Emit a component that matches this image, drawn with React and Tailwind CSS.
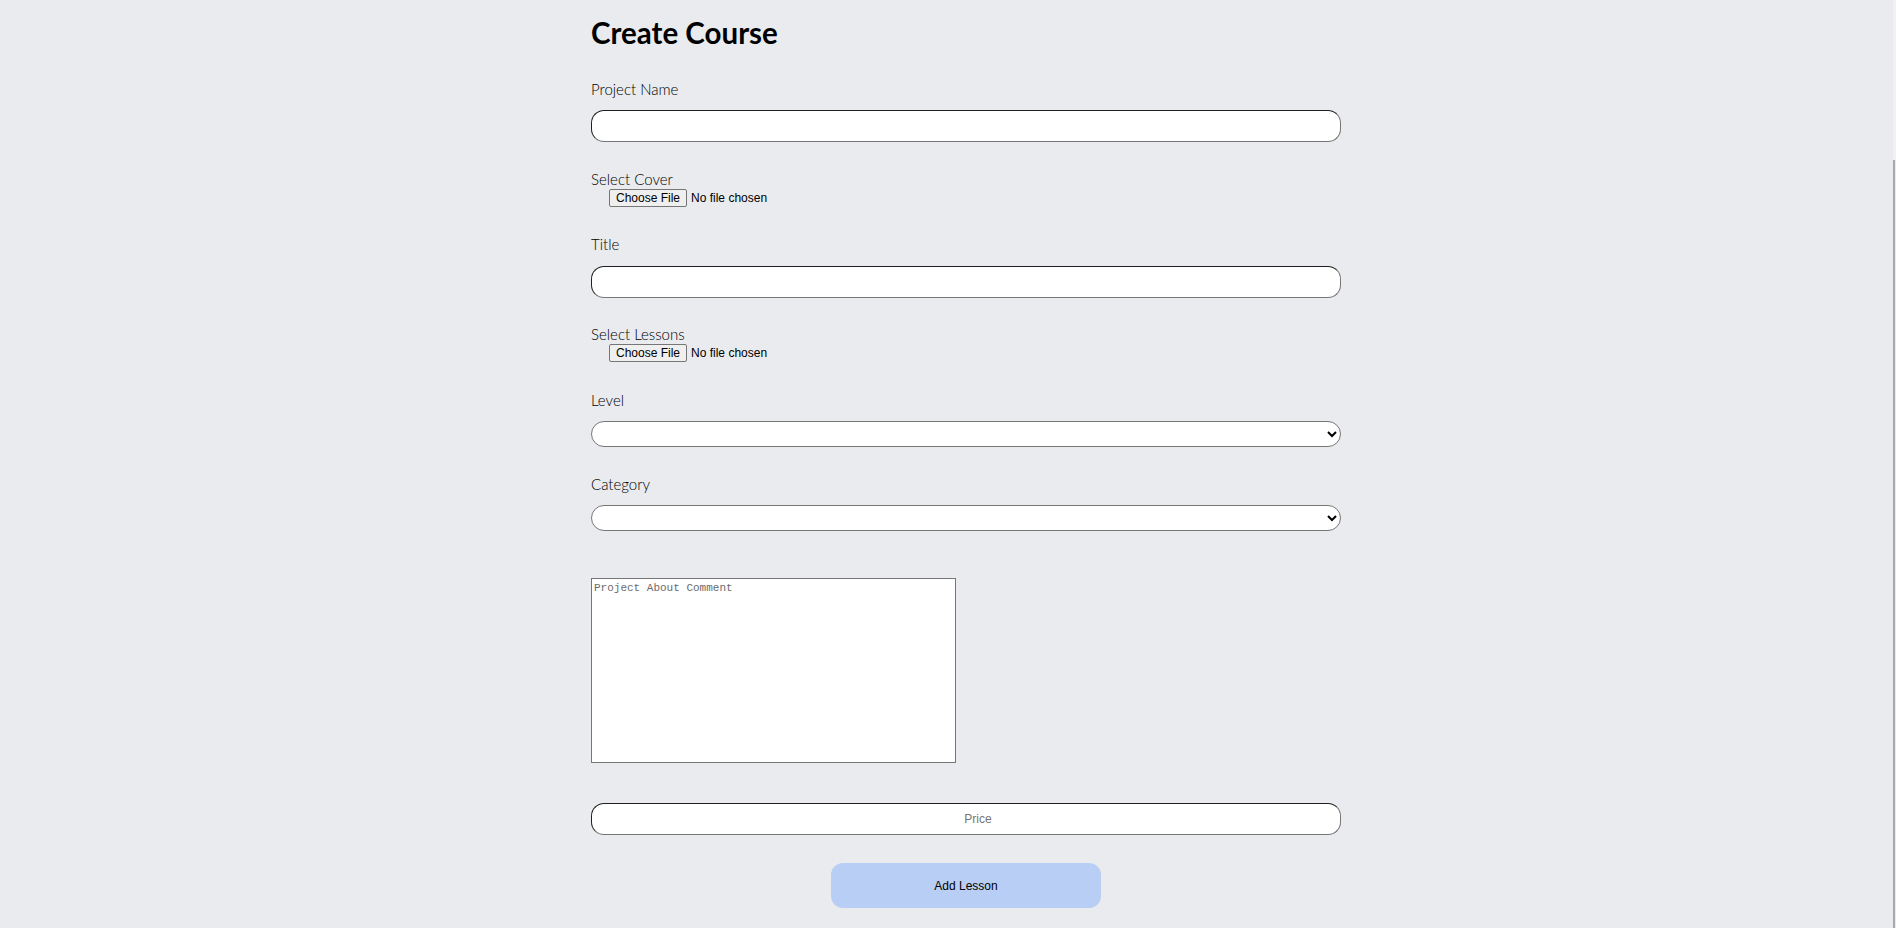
import React from 'react';

const labelCls = "block text-[15px] leading-[20px] font-light text-black font-['Lato',sans-serif]";
const inputCls =
  "block w-full h-[32px] rounded-[13px] border border-t-[#1f1f1f] border-l-[#1f1f1f] border-r-[#767676] border-b-[#767676] bg-white px-2 text-[12px] font-['Liberation_Sans',Arial,sans-serif] outline-none";
const selectCls =
  "block w-full h-[26px] rounded-[13px] border border-[#767676] bg-white px-1 text-[12px] font-['Liberation_Sans',Arial,sans-serif]";
const fileCls =
  "block ml-[18px] text-[12px] leading-[14px] text-black font-['Liberation_Sans',Arial,sans-serif] file:mr-[4px] file:border file:border-[#767676] file:bg-[#efefef] file:rounded-[2px] file:px-[6px] file:py-[1px] file:text-black";

export default function App() {
  return (
    <div className="relative min-h-screen bg-[#e9ebef] pl-[591px] pb-[21px]">
      <form className="w-[750px] flex flex-col" onSubmit={(e) => e.preventDefault()}>
        <h1 className="mt-[15px] text-[29.5px] leading-[36px] font-bold text-black font-['Lato',sans-serif]">
          Create Course
        </h1>

        <label className={`${labelCls} mt-[28px]`}>Project Name</label>
        <input type="text" className={`${inputCls} mt-[11px]`} />

        <label className={`${labelCls} mt-[27px]`}>Select Cover</label>
        <input type="file" className={fileCls} />

        <label className={`${labelCls} mt-[27px]`}>Title</label>
        <input type="text" className={`${inputCls} mt-[12px]`} />

        <label className={`${labelCls} mt-[26px]`}>Select Lessons</label>
        <input type="file" className={fileCls} />

        <label className={`${labelCls} mt-[28px]`}>Level</label>
        <select className={`${selectCls} mt-[11px]`} defaultValue="">
          <option value=""></option>
        </select>

        <label className={`${labelCls} mt-[27px]`}>Category</label>
        <select className={`${selectCls} mt-[11px]`} defaultValue="">
          <option value=""></option>
        </select>

        <textarea
          placeholder="Project About Comment"
          className="mt-[47px] w-[365px] h-[185px] border border-[#767676] bg-white p-[2px] text-[11px] leading-[14px] font-['Liberation_Mono',monospace] placeholder:text-[#6b6b6b] resize-none outline-none"
        />

        <input
          type="text"
          placeholder="Price"
          className={`${inputCls} mt-[40px] h-[31px] pl-[26px] pr-[2px] text-center placeholder:text-[#757575]`}
        />

        <button
          type="button"
          className="mt-[28px] self-center w-[270px] h-[45px] rounded-[12px] bg-[#b9cef4] text-[12px] text-black font-['Liberation_Sans',Arial,sans-serif]"
        >
          Add Lesson
        </button>
      </form>

      <div className="absolute right-0 top-0 h-[160px] w-[3px] bg-[#f1f1f1]" />
      <div className="absolute right-[1px] top-[160px] bottom-0 w-[2px] bg-[#a8a8a8]" />
    </div>
  );
}
